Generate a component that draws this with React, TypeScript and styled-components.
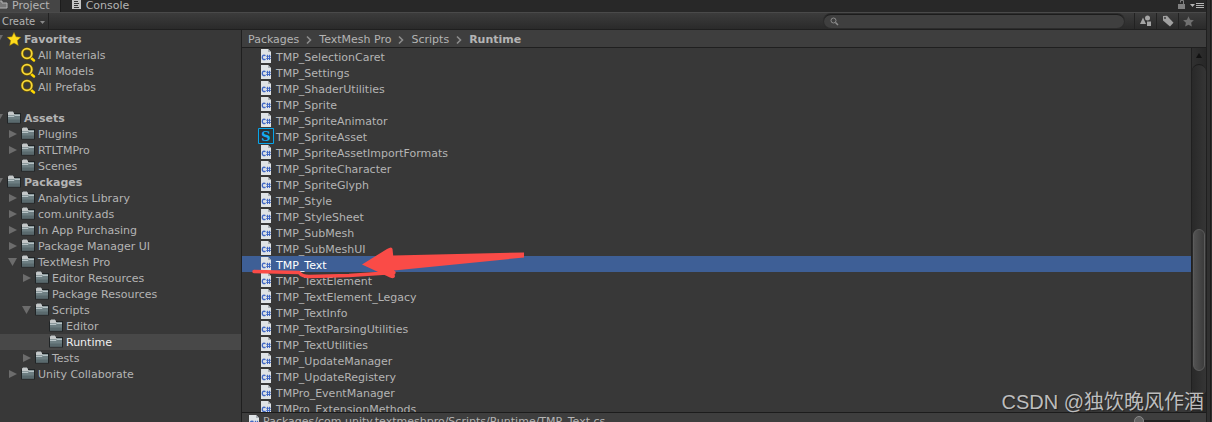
import React from "react";
import styled, { createGlobalStyle } from "styled-components";

const GlobalStyle = createGlobalStyle`
  * { box-sizing: border-box; }
  body { margin: 0; background: #282828; }
  button, input { font: inherit; color: inherit; }
`;

const Window = styled.div`
  display: flex;
  flex-direction: column;
  height: 100vh;
  padding-right: 6px;
  overflow: hidden;
  position: relative;
  background: linear-gradient(to left, #303030 1px, #1d1d1d 1px 2px, #303030 2px 5px, #1f1f1f 5px);
  color: #b4b4b4;
  font: 11px/16px "DejaVu Sans", sans-serif;
`;

const TabBar = styled.header`
  display: flex;
  align-items: stretch;
  height: 12px;
  flex: none;
  background: #282828;
`;

const Tab = styled.button<{ $active?: boolean }>`
  display: flex;
  align-items: center;
  gap: 5px;
  padding: 0 10px 0 0;
  border: 0;
  border-right: 1px solid ${(p) => (p.$active ? "#1c1c1c" : "transparent")};
  background: ${(p) => (p.$active ? "#454545" : "transparent")};
  line-height: 12px;
  & + & { padding-left: 11px; }
`;

const TabTools = styled.div`
  display: flex;
  align-items: center;
  gap: 4px;
  margin-left: auto;
  padding-right: 2px;
`;

const IconButton = styled.button`
  display: flex;
  align-items: center;
  justify-content: center;
  padding: 0;
  border: 0;
  background: none;
`;

const Toolbar = styled.div`
  display: flex;
  align-items: stretch;
  height: 18px;
  flex: none;
  border-top: 1px solid #4a4a4a;
  border-bottom: 1px solid #1f1f1f;
  background: linear-gradient(#3c3c3c, #2a2a2a);
`;

const CreateButton = styled.button`
  display: flex;
  align-items: center;
  gap: 5px;
  width: 49px;
  padding: 2px 0 0 2px;
  border: 0;
  border-right: 1px solid #222;
  background: none;
  font-size: 10px;
`;

const Search = styled.label`
  display: flex;
  align-items: center;
  gap: 4px;
  width: 300px;
  height: 14px;
  margin: 1px 10px 0 auto;
  padding-left: 6px;
  border-radius: 7px;
  border-top: 1px solid #1c1c1c;
  background: #3f3f3f;
  box-shadow: 0 0 0 1px #2c2c2c;
`;

const SearchInput = styled.input`
  flex: 1;
  min-width: 0;
  height: 12px;
  padding: 0;
  border: 0;
  outline: 0;
  background: none;
`;

const ToolButton = styled(IconButton)`
  width: 22px;
  border-left: 1px solid #222;
  &:last-child { width: 28px; padding-right: 8px; }
`;

const Panels = styled.main`
  display: flex;
  flex: 1;
  min-height: 0;
`;

const Sidebar = styled.nav`
  width: 242px;
  flex: none;
  overflow: hidden;
  border-right: 1px solid #1f1f1f;
  background: #383838;
`;

const Group = styled.div`
  padding-top: 1px;
  & + & { padding-top: 15px; }
`;

const TreeRow = styled.button<{ $depth: number; $selected?: boolean }>`
  display: flex;
  align-items: center;
  gap: 3px;
  width: 100%;
  height: 16px;
  padding: 0 0 0 ${(p) => p.$depth * 14 + 7}px;
  border: 0;
  white-space: nowrap;
  background: ${(p) => (p.$selected ? "#484848" : "transparent")};
  color: ${(p) => (p.$selected ? "#f0f0f0" : "#b4b4b4")};
  font-weight: ${(p) => (p.$depth === 0 ? 700 : 400)};
`;

const TreeLabel = styled.span`
  padding-top: 2px;
`;

const ArrowSlot = styled.span`
  display: flex;
  width: 0;
  margin-right: -3px;
`;

const Drawing = styled.svg`
  display: block;
  flex: none;
  overflow: visible;
`;

const Browser = styled.section`
  display: flex;
  flex-direction: column;
  flex: 1;
  min-width: 0;
`;

const Breadcrumbs = styled.div`
  display: flex;
  align-items: center;
  gap: 7px;
  height: 18px;
  flex: none;
  padding: 2px 0 0 6px;
  border-bottom: 1px solid #1f1f1f;
  background: #3e3e3e;
`;

const Crumb = styled.a`
  color: inherit;
  text-decoration: none;
  &:last-child { font-weight: 700; }
`;

const Listing = styled.div`
  display: flex;
  flex: 1;
  min-height: 0;
  background: #383838;
`;

const Files = styled.div`
  flex: 1;
  min-width: 0;
  overflow: hidden;
`;

const FileRow = styled.button<{ $selected?: boolean }>`
  display: flex;
  align-items: center;
  gap: 2px;
  width: 100%;
  height: 16px;
  padding: 0 0 0 16px;
  border: 0;
  white-space: nowrap;
  background: ${(p) => (p.$selected ? "#3e5f96" : "transparent")};
  color: ${(p) => (p.$selected ? "#fff" : "#b4b4b4")};
`;

const FileLabel = styled.span`
  padding-top: 4px;
`;

const ScrollBar = styled.div`
  display: flex;
  flex-direction: column;
  width: 15px;
  flex: none;
  border-left: 1px solid #202020;
  background: linear-gradient(to right, #303030, #272727);
`;

const ScrollTrack = styled.div`
  display: flex;
  flex-direction: column;
  flex: 1;
  min-height: 0;
  border-radius: 7px;
  border-top: 1px solid #1c1c1c;
  border-bottom: 1px solid #444;
  background: linear-gradient(to right, #292929, #353535);
`;

const ScrollSpace = styled.div<{ $share: number }>`
  flex: ${(p) => p.$share} 0 0;
`;

const ScrollThumb = styled.div`
  flex: 142 0 0;
  margin: 0 1px;
  border: 1px solid #5c5c5c;
  border-radius: 6px;
  background: linear-gradient(to right, #525252, #3c3c3c);
`;

const PathBar = styled.footer`
  display: flex;
  justify-content: space-between;
  height: 10px;
  flex: none;
  overflow: hidden;
  padding: 1px 16px 0 7px;
  border-top: 1px solid #1c1c1c;
  background: #3e3e3e;
`;

const PathText = styled.span`
  display: flex;
  align-items: center;
  gap: 4px;
  height: 16px;
`;

const SizeSlider = styled.input`
  appearance: none;
  width: 56px;
  height: 10px;
  margin: 2px 0 0;
  background: linear-gradient(transparent 4px, #222 4px 6px, #333 6px 7px, transparent 7px);
  &::-webkit-slider-thumb {
    appearance: none;
    width: 10px;
    height: 10px;
    border-radius: 5px;
    border: 1px solid #888;
    background: #606060;
  }
`;

const Annotation = styled.svg`
  position: absolute;
  left: 250px;
  top: 244px;
  pointer-events: none;
`;

const Watermark = styled.div`
  position: absolute;
  right: 8px;
  bottom: 7px;
  color: #bdbdbd;
  font: 20px/26px "Liberation Sans", "Noto Sans CJK SC", sans-serif;
  text-shadow: 1px 1px 1px #222;
`;

const Disclosure = ({ state }: { state?: "open" | "closed" }) =>
  state ? (
    <Drawing width="1" height="10" viewBox="0 0 1 10" aria-hidden>
      <path d={state === "open" ? "M-13 1h9l-4.500 8z" : "M-12 1v8l8-4z"} fill="#6c6c6c" />
    </Drawing>
  ) : null;

const Folder = () => (
  <Drawing width="14" height="14" viewBox="0 1 14 14" aria-hidden>
    <path d="M0 3.500h1V1.500h6V3h7v10.500H0z" fill="#202426" />
    <path d="M1 5V2.500L2 1.500h4L7 3v1h6v2H1z" fill="#c4c8c9" />
    <path d="M1 5h6l1-1h5v2H1z" fill="#8b999c" />
    <path d="M1 6h12v6.500H1z" fill="#6d7e82" />
    <path d="M1 6.500h6l1-1h5" fill="none" stroke="#b7c3c6" strokeWidth="1" />
    <path d="M1 9.500h12v3H1z" fill="#5a6a6e" />
  </Drawing>
);

const STAR = "M7 .4l2 4.400 4.800.5-3.500 3.300 1 4.800L7 11l-4.300 2.400 1-4.800L.2 5.300 5 4.800z";

const FavoriteStar = () => (
  <Drawing width="14" height="14" viewBox="0 0 14 14" aria-hidden>
    <path d={STAR} fill="#ffdc1c" stroke="#a98600" strokeWidth=".5" />
  </Drawing>
);

const Lens = () => (
  <Drawing width="14" height="14" viewBox="0 0 14 14" aria-hidden>
    <path d="M9.500 9.500L13 12.500" stroke="#ffd800" strokeWidth="2.500" strokeLinecap="round" />
    <circle cx="6" cy="5.500" r="4.800" fill="none" stroke="#6b5600" strokeWidth="3" />
    <circle cx="6" cy="5.500" r="4.800" fill="none" stroke="#f7d83a" strokeWidth="1.800" />
  </Drawing>
);

const ScriptShapes = () => (
  <>
    <path d="M3 1h7l3 3v11H3z" fill="#dfe3e6" />
    <path d="M10 1v3h3z" fill="#a9b0b6" />
    <path d="M7.500 7.700C5.800 6.600 4.300 7.500 4.300 9.400s1.500 2.800 3.200 1.700" fill="none" stroke="#4269c4" strokeWidth="1.400" />
    <path d="M9.500 6.800v5.200M11.500 6.800v5.200M8.300 8.300h4.500M8.300 10.500h4.500" fill="none" stroke="#4269c4" />
  </>
);

const Script = () => (
  <Drawing width="16" height="16" viewBox="0 0 16 16" aria-hidden>
    <ScriptShapes />
  </Drawing>
);

const SpriteAsset = () => (
  <Drawing width="16" height="16" viewBox="0 0 16 16" aria-hidden>
    <path d="M.5.5h15v15H.5z" fill="#2e3436" stroke="#08a5ea" />
    <text x="8" y="13" textAnchor="middle" fill="#12aef2" fontFamily="DejaVu Serif, serif" fontWeight="700" fontSize="13">S</text>
  </Drawing>
);

const Chevron = () => (
  <Drawing width="6" height="8" viewBox="0 0 6 8" aria-hidden>
    <path d="M1 .5L4.500 4 1 7.500" fill="none" stroke="#8c8c8c" strokeWidth="1.600" />
  </Drawing>
);

type Icon = "star" | "lens" | "folder";
type Node = { name: string; depth: number; arrow?: "open" | "closed"; icon?: Icon };

const favorites: Node[] = [
  { name: "Favorites", depth: 0, arrow: "open", icon: "star" },
  { name: "All Materials", depth: 1, icon: "lens" },
  { name: "All Models", depth: 1, icon: "lens" },
  { name: "All Prefabs", depth: 1, icon: "lens" },
];

const folders: Node[] = [
  { name: "Assets", depth: 0, arrow: "open" },
  { name: "Plugins", depth: 1, arrow: "closed" },
  { name: "RTLTMPro", depth: 1, arrow: "closed" },
  { name: "Scenes", depth: 1 },
  { name: "Packages", depth: 0, arrow: "open" },
  { name: "Analytics Library", depth: 1, arrow: "closed" },
  { name: "com.unity.ads", depth: 1, arrow: "closed" },
  { name: "In App Purchasing", depth: 1, arrow: "closed" },
  { name: "Package Manager UI", depth: 1, arrow: "closed" },
  { name: "TextMesh Pro", depth: 1, arrow: "open" },
  { name: "Editor Resources", depth: 2, arrow: "closed" },
  { name: "Package Resources", depth: 2 },
  { name: "Scripts", depth: 2, arrow: "open" },
  { name: "Editor", depth: 3 },
  { name: "Runtime", depth: 3 },
  { name: "Tests", depth: 2, arrow: "closed" },
  { name: "Unity Collaborate", depth: 1, arrow: "closed" },
];

const files = [
  "TMP_SelectionCaret", "TMP_Settings", "TMP_ShaderUtilities", "TMP_Sprite",
  "TMP_SpriteAnimator", "TMP_SpriteAsset", "TMP_SpriteAssetImportFormats",
  "TMP_SpriteCharacter", "TMP_SpriteGlyph", "TMP_Style", "TMP_StyleSheet",
  "TMP_SubMesh", "TMP_SubMeshUI", "TMP_Text", "TMP_TextElement",
  "TMP_TextElement_Legacy", "TMP_TextInfo", "TMP_TextParsingUtilities",
  "TMP_TextUtilities", "TMP_UpdateManager", "TMP_UpdateRegistery",
  "TMPro_EventManager", "TMPro_ExtensionMethods",
];

const Tree = ({ nodes }: { nodes: Node[] }) => (
  <Group>
    {nodes.map((n) => (
      <TreeRow key={n.name} $depth={n.depth} $selected={n.name === "Runtime"}>
        <ArrowSlot><Disclosure state={n.arrow} /></ArrowSlot>
        {n.icon === "star" ? <FavoriteStar /> : n.icon === "lens" ? <Lens /> : <Folder />}
        <TreeLabel>{n.name}</TreeLabel>
      </TreeRow>
    ))}
  </Group>
);

export default function App() {
  return (
    <>
      <GlobalStyle />
      <Window>
        <TabBar>
          <Tab $active>
            <Drawing width="7" height="12" viewBox="0 1 7 12" aria-hidden>
              <path d="M-4 2h6v2h5v5h-11z" fill="#777" stroke="#b5b5b5" />
            </Drawing>
            Project
          </Tab>
          <Tab>
            <Drawing width="9" height="12" viewBox="0 2 9 12" aria-hidden>
              <path d="M0 0h9v11H0z" fill="#c4c4c4" />
              <path d="M2 3.500h4M2 5.500h5M2 7.500h4M2 9.500h5" stroke="#333" />
            </Drawing>
            Console
          </Tab>
          <TabTools>
            <IconButton aria-label="Lock">
              <Drawing width="8" height="10" viewBox="0 0 8 10" aria-hidden>
                <path d="M0 3h7v5H0z" fill="#808080" />
                <path d="M2.500 1.500V-.5h3V3" fill="none" stroke="#808080" />
              </Drawing>
            </IconButton>
            <IconButton aria-label="Tab menu">
              <Drawing width="14" height="10" viewBox="0 0 14 10" aria-hidden>
                <path d="M0 3h5L2.500 6z" fill="#b5b5b5" />
                <path d="M6 2.500h8M6 4.500h8M6 6.500h8" stroke="#b5b5b5" />
              </Drawing>
            </IconButton>
          </TabTools>
        </TabBar>
        <Toolbar>
          <CreateButton>
            Create
            <Drawing width="5" height="3" viewBox="0 0 5 3" aria-hidden><path d="M0 0h5L2.500 3z" fill="#888" /></Drawing>
          </CreateButton>
          <Search>
            <Drawing width="9" height="9" viewBox="0 0 9 9" aria-hidden>
              <circle cx="3.500" cy="3.500" r="2.500" fill="none" stroke="#8d8d8d" />
              <path d="M5.500 5.500L8 8" stroke="#8d8d8d" strokeWidth="1.500" />
            </Drawing>
            <SearchInput aria-label="Search assets" />
          </Search>
          <ToolButton aria-label="Search by type">
            <Drawing width="12" height="11" viewBox="0 1 12 11" aria-hidden>
              <path d="M0 9l3-6.500L6 9z" fill="#a5a5a5" />
              <circle cx="7.500" cy="3" r="2.500" fill="#a5a5a5" />
              <path d="M7 6.500h4V11H7z" fill="#a5a5a5" />
            </Drawing>
          </ToolButton>
          <ToolButton aria-label="Search by label">
            <Drawing width="12" height="12" viewBox="0 0 12 12" aria-hidden>
              <path d="M1 1l4-.2 6.500 7L8 11.500l-7-6z" fill="#a0a0a0" />
              <circle cx="3" cy="3" r=".9" fill="#333" />
            </Drawing>
          </ToolButton>
          <ToolButton aria-label="Save search">
            <Drawing width="11" height="11" viewBox="0 0 14 14" aria-hidden>
              <path d={STAR} fill="#707070" />
            </Drawing>
          </ToolButton>
        </Toolbar>
        <Panels>
          <Sidebar>
            <Tree nodes={favorites} />
            <Tree nodes={folders} />
          </Sidebar>
          <Browser>
            <Breadcrumbs>
              <Crumb href="#packages">Packages</Crumb><Chevron />
              <Crumb href="#textmesh">TextMesh Pro</Crumb><Chevron />
              <Crumb href="#scripts">Scripts</Crumb><Chevron />
              <Crumb href="#runtime">Runtime</Crumb>
            </Breadcrumbs>
            <Listing>
              <Files>
                {files.map((name) => (
                  <FileRow key={name} $selected={name === "TMP_Text"}>
                    {name === "TMP_SpriteAsset" ? <SpriteAsset /> : <Script />}
                    <FileLabel>{name}</FileLabel>
                  </FileRow>
                ))}
              </Files>
              <ScrollBar>
                <IconButton aria-label="Scroll up">
                  <Drawing width="14" height="16" viewBox="0 0 14 16" aria-hidden><path d="M4 10l3-5 3 5z" fill="#111" /></Drawing>
                </IconButton>
                <ScrollTrack>
                  <ScrollSpace $share={165} />
                  <ScrollThumb />
                  <ScrollSpace $share={24} />
                </ScrollTrack>
                <IconButton aria-label="Scroll down">
                  <Drawing width="14" height="16" viewBox="0 0 14 16" aria-hidden><path d="M4 6l3 5 3-5z" fill="#111" /></Drawing>
                </IconButton>
              </ScrollBar>
            </Listing>
            <PathBar>
              <PathText>
                <Drawing width="10" height="14" viewBox="3 1 10 14" aria-hidden>
                  <ScriptShapes />
                </Drawing>
                Packages/com.unity.textmeshpro/Scripts/Runtime/TMP_Text.cs
              </PathText>
              <SizeSlider type="range" aria-label="Icon size" defaultValue={0} />
            </PathBar>
          </Browser>
        </Panels>
        <Annotation width="276" height="38" viewBox="250 244 276 38" aria-hidden>
          <path d="M362 264.500L387 249q5-3 5.500 0l.7 6.500L524 252.500v5l-130 13 1 6q-1 3-5 1z" fill="#fa4b47" />
          <path d="M254 271.500l45 1q3 4 10 4l40-1 45-3" fill="none" stroke="#fa4b47" strokeWidth="3.500" strokeLinecap="round" strokeLinejoin="round" />
        </Annotation>
        <Watermark>CSDN @独饮晚风作酒</Watermark>
      </Window>
    </>
  );
}
